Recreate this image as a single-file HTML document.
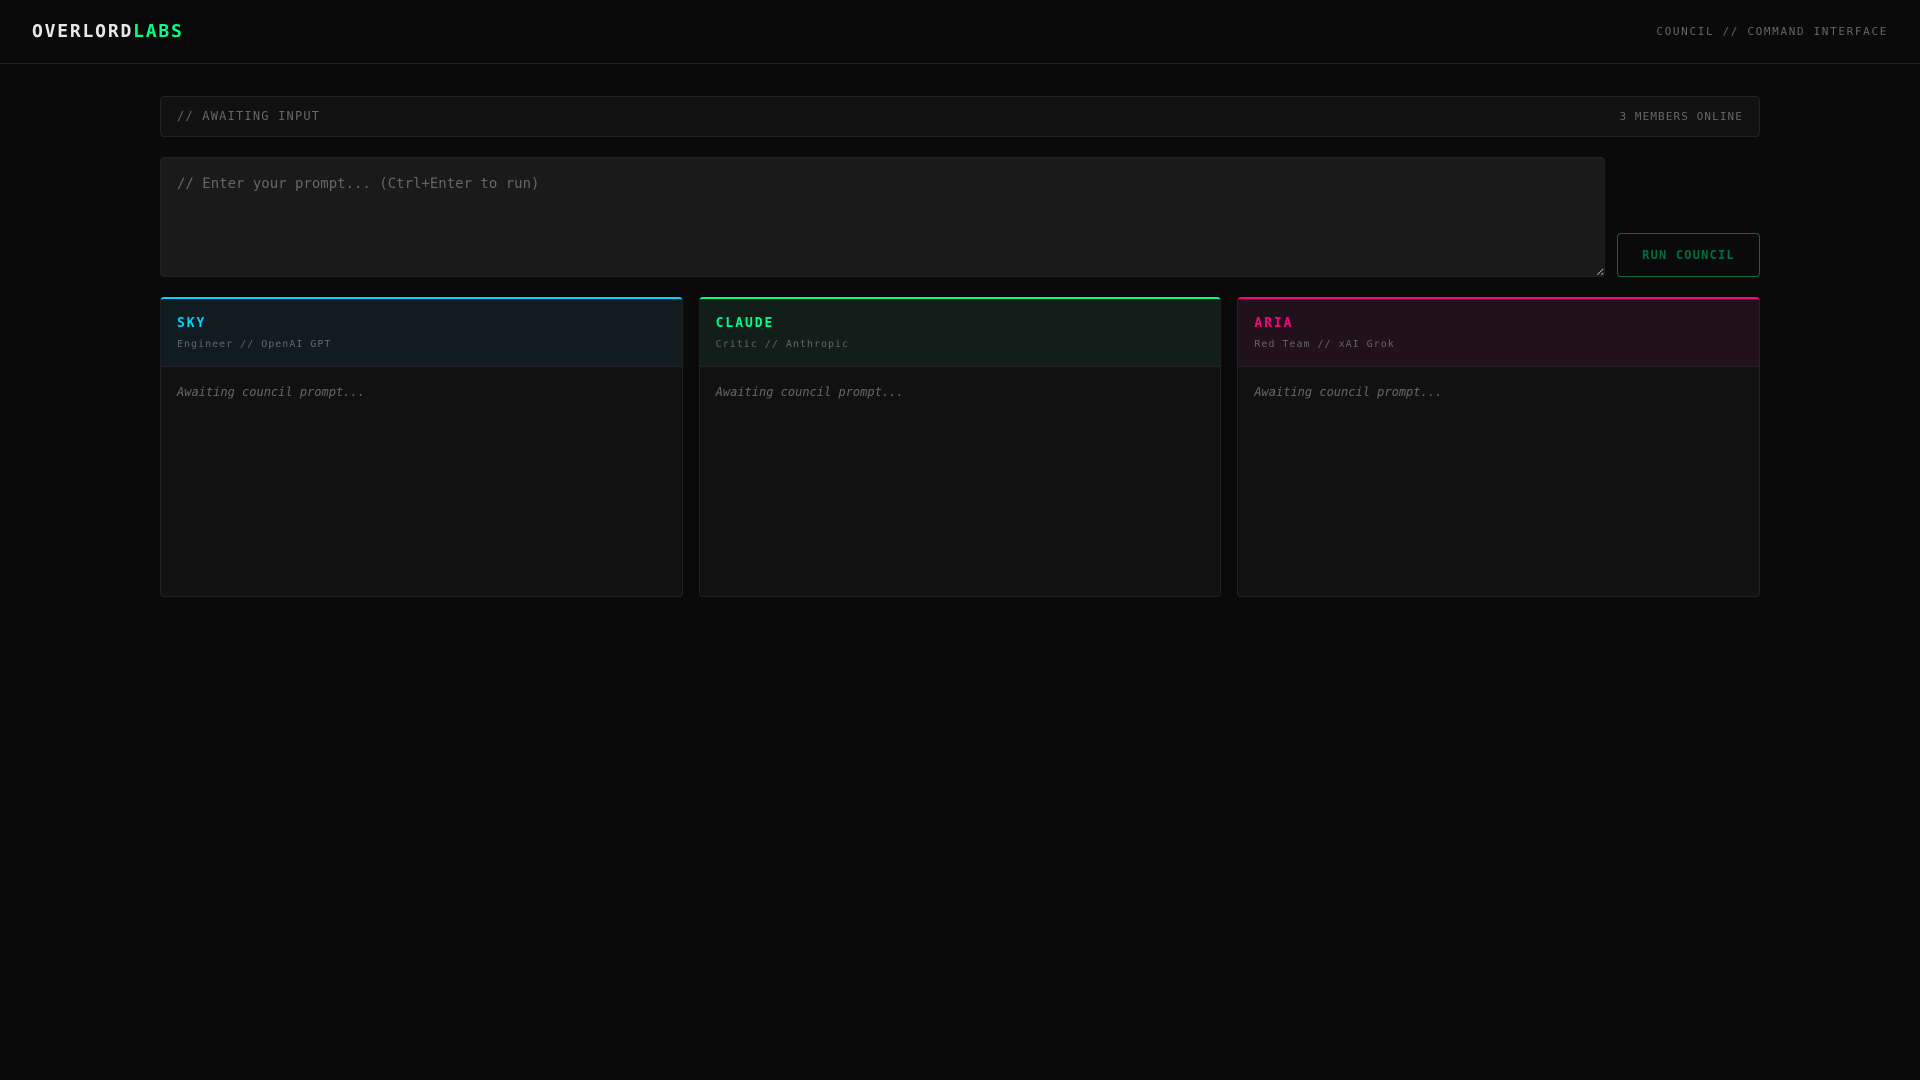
<!DOCTYPE html>
<html lang="en">
<head>
<meta charset="utf-8">
<title>Overlord Labs Council</title>
<style>
*{box-sizing:border-box;margin:0;padding:0}
html,body{width:1920px;height:1080px;overflow:hidden;background:#0a0a0a}
body{font-family:"DejaVu Sans Mono",monospace;color:#e0e0e0}
header{height:64px;border-bottom:1px solid #222;display:flex;align-items:center;justify-content:space-between;padding:0 32px}
.logo{font-size:18px;font-weight:700;letter-spacing:.1em;color:#e8e8e8}
.logo span{color:#00ff88}
.sub{font-size:11px;letter-spacing:.15em;color:#666}
main{width:1600px;margin:32px auto 0}
.status{height:41px;background:#111;border:1px solid #222;border-radius:4px;display:flex;align-items:center;justify-content:space-between;padding:0 16px}
.status .l{font-size:12px;letter-spacing:.1em;color:#666;position:relative;top:-1px}
.status .r{font-size:11px;letter-spacing:.1em;color:#666}
.input{display:flex;align-items:flex-end;gap:12px;margin-top:20px}
textarea{flex:1;height:120px;background:#1a1a1a;border:1px solid #222;border-radius:4px;padding:16px;font-family:inherit;font-size:14px;line-height:20px;color:#e0e0e0;outline:none;resize:vertical;display:block}
textarea::placeholder{color:#666;opacity:1}
button{width:143px;height:44px;background:transparent;border:1px solid #00ff88;border-radius:4px;color:#00ff88;font-family:inherit;font-size:12px;font-weight:700;letter-spacing:.1em;opacity:.4}
.grid{display:grid;grid-template-columns:repeat(3,1fr);gap:16px;margin-top:20px}
.card{height:300px;background:#111;border:1px solid #222;border-top:2px solid var(--c);border-radius:4px;overflow:hidden}
.head{height:68px;padding:17px 16px 0;border-bottom:1px solid #222;background:var(--h)}
.name{font-size:13px;font-weight:700;letter-spacing:.15em;color:var(--c);line-height:15px}
.role{font-size:10px;letter-spacing:.1em;color:#666;line-height:12px;margin-top:8px}
.body{padding:16px;font-size:12px;font-style:italic;color:#666;line-height:19px}
.sky{--c:#00d4ff;--h:#111c21}
.claude{--c:#00ff88;--h:#111e19}
.aria{--c:#ff0080;--h:#21111a}
</style>
</head>
<body>
<header>
<div class="logo">OVERLORD<span>LABS</span></div>
<div class="sub">COUNCIL // COMMAND INTERFACE</div>
</header>
<main>
<div class="status"><div class="l">// AWAITING INPUT</div><div class="r">3 MEMBERS ONLINE</div></div>
<div class="input">
<textarea placeholder="// Enter your prompt... (Ctrl+Enter to run)"></textarea>
<button disabled>RUN COUNCIL</button>
</div>
<div class="grid">
<div class="card sky"><div class="head"><div class="name">SKY</div><div class="role">Engineer // OpenAI GPT</div></div><div class="body">Awaiting council prompt...</div></div>
<div class="card claude"><div class="head"><div class="name">CLAUDE</div><div class="role">Critic // Anthropic</div></div><div class="body">Awaiting council prompt...</div></div>
<div class="card aria"><div class="head"><div class="name">ARIA</div><div class="role">Red Team // xAI Grok</div></div><div class="body">Awaiting council prompt...</div></div>
</div>
</main>
</body>
</html>
